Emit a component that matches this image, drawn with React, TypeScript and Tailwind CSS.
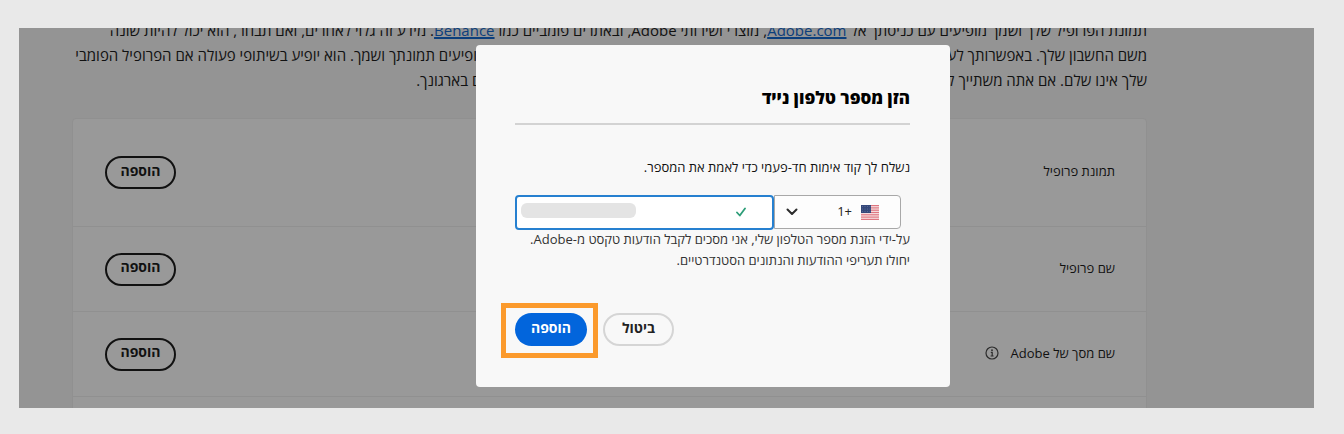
import { useState } from "react";

interface ProfileRow {
  label: string;
  hasInfo?: boolean;
  tall?: boolean;
}

const rows: ProfileRow[] = [
  { label: "תמונת פרופיל", tall: true },
  { label: "שם פרופיל" },
  { label: "שם מסך של Adobe", hasInfo: true },
];

const InfoIcon = () => (
  <svg width="14" height="14" viewBox="0 0 14 14" fill="none" aria-hidden="true">
    <circle cx="7" cy="7" r="6" stroke="#2c2c2c" strokeWidth="1.2" />
    <circle cx="7" cy="4.2" r="0.9" fill="#2c2c2c" />
    <path d="M5.8 6.3H7.2V10M5.6 10H8.6" stroke="#2c2c2c" strokeWidth="1.2" />
  </svg>
);

const FlagIcon = () => (
  <svg
    width="18"
    height="15"
    viewBox="0 0 18 15"
    className="pointer-events-none absolute top-[10px] right-[22px]"
    aria-hidden="true"
  >
    <rect width="18" height="15" fill="#f8e6e7" />
    {[0, 1, 2, 3, 4, 5, 6].map((i) => (
      <rect key={i} y={i * 2.3} width="18" height="1.2" fill="#de7680" />
    ))}
    <rect width="10" height="8" fill="#34487a" />
    {[1.5, 4, 6.5].map((y) =>
      [1.5, 4, 6.5, 9].map((x) => <circle key={`${x}-${y}`} cx={x} cy={y} r="0.4" fill="#8593b5" />)
    )}
  </svg>
);

const ProfileCard = () => (
  <section className="mt-[25px] rounded-t-sm border border-[#909090] bg-[#999999]">
    {rows.map((row) => (
      <div
        key={row.label}
        className={`flex items-center justify-between border-b border-[#909090] pr-[31px] pl-8 ${row.tall ? "h-[108px]" : "h-[85px]"}`}
      >
        <div className="flex items-center gap-3 pb-[3px] text-[13px] leading-5 text-[#111111]">
          <span>{row.label}</span>
          {row.hasInfo && <InfoIcon />}
        </div>
        <button className="h-[33px] w-[71px] rounded-full border-2 border-[#111111] pb-1 text-sm leading-5 font-bold text-[#111111]">
          הוספה
        </button>
      </div>
    ))}
    <div className="h-10" />
  </section>
);

const PhoneDialog = () => {
  const [phone, setPhone] = useState("");

  return (
    <div
      role="dialog"
      aria-labelledby="phone-title"
      className="h-fit w-full max-w-[474px] rounded-sm bg-[#f8f8f8] pt-[41px] pr-10 pb-[41px] pl-[39px]"
    >
      <h2 id="phone-title" className="border-b-2 border-[#d3d3d3] pb-[13px] text-[17px] leading-6 font-extrabold text-black">
        הזן מספר טלפון נייד
      </h2>
      <label htmlFor="phone" className="mt-8 block text-[13px] leading-5 text-[#111111]">
        נשלח לך קוד אימות חד-פעמי כדי לאמת את המספר.
      </label>

      <div className="mt-[18px] flex pr-[9px]">
        <div className="relative w-[127px]">
          <select
            aria-label="קידומת מדינה"
            className="h-[34px] w-full appearance-none rounded-r border border-[#a8a8a8] bg-[#fdfdfd] pr-[48px] text-[13px] text-[#222222]"
          >
            <option>+1</option>
          </select>
          <FlagIcon />
          <svg
            width="12"
            height="8"
            viewBox="0 0 12 8"
            fill="none"
            className="pointer-events-none absolute top-[13px] left-3"
            aria-hidden="true"
          >
            <path d="M1.5 1.5L6 6L10.5 1.5" stroke="#2c2c2c" strokeWidth="2" strokeLinecap="round" strokeLinejoin="round" />
          </svg>
        </div>
        <div className="relative flex-1">
          <input
            id="phone"
            type="tel"
            value={phone}
            onChange={(e) => setPhone(e.target.value)}
            className="block h-[35px] w-full rounded border-2 border-[#2680d0] bg-white px-2 text-sm outline-none"
          />
          <span className="pointer-events-none absolute top-2 left-[6px] h-[15px] w-[115px] rounded-md bg-[#e4e4e4]" />
          <svg
            width="10"
            height="10"
            viewBox="0 0 10 10"
            fill="none"
            className="pointer-events-none absolute top-3 right-7"
            aria-hidden="true"
          >
            <path d="M1 5.5L3.8 8.5L9 1.5" stroke="#2d9d78" strokeWidth="1.8" strokeLinecap="round" strokeLinejoin="round" />
          </svg>
        </div>
      </div>

      <p className="-mt-px text-[13px] leading-[21px] text-[#333333]">
        על-ידי הזנת מספר הטלפון שלי, אני מסכים לקבל הודעות טקסט מ-Adobe. יחולו תעריפי ההודעות והנתונים הסטנדרטיים.
      </p>

      <div className="mt-[42px] flex justify-end gap-4">
        <button className="h-[33px] w-[71px] rounded-full border-2 border-[#d5d5d5] pb-1 text-sm leading-5 font-bold text-[#222222]">
          ביטול
        </button>
        <div className="relative">
          <button className="block h-[33px] w-[72px] rounded-full bg-[#0265dc] pb-1 text-sm leading-5 font-bold text-white">
            הוספה
          </button>
          <span className="pointer-events-none absolute -top-[10px] -right-[11px] -bottom-3 -left-[14px] border-[5px] border-[#fb9a2c]" />
        </div>
      </div>
    </div>
  );
};

const App = () => {
  return (
    <div
      dir="rtl"
      className="min-h-screen bg-[#e9e9e9] pt-7 pr-[30px] pb-[26px] pl-[19px] font-['Open_Sans','Noto_Sans',sans-serif]"
    >
      <main className="relative h-[380px] overflow-hidden bg-[#949494] pr-[167px] pl-[53px]">
        <p className="-mt-[10px] text-[15px] leading-[25px] text-[#111111]">
          תמונת הפרופיל שלך ושמך מופיעים עם כניסתך אל{" "}
          <a href="#adobe" className="text-[#0c3f7c] underline decoration-2">Adobe.com</a>, מוצרי ושירותי Adobe, ובאתרים פומביים כמו{" "}
          <a href="#behance" className="text-[#0c3f7c] underline decoration-2">Behance</a>. מידע זה גלוי לאחרים, ואם תבחר, הוא יכול להיות שונה
          <br />
          משם החשבון שלך. באפשרותך לערוך את הפרופיל הפומבי שלך ולבחור מי יוכל לראות אותו, כדי לשלוט היטב היכן מופיעים תמונתך ושמך. הוא יופיע בשיתופי פעולה אם הפרופיל הפומבי
          <br />
          שלך אינו שלם. אם אתה משתייך לארגון, ייתכן שפרטים אלה יהיו גלויים גם למנהלי המערכות וגם למשתמשים אחרים בארגונך.
        </p>
        <ProfileCard />

        <div className="absolute inset-0 flex justify-center pt-[17px] pl-[93px]">
          <PhoneDialog />
        </div>
      </main>
    </div>
  );
};

export default App;
